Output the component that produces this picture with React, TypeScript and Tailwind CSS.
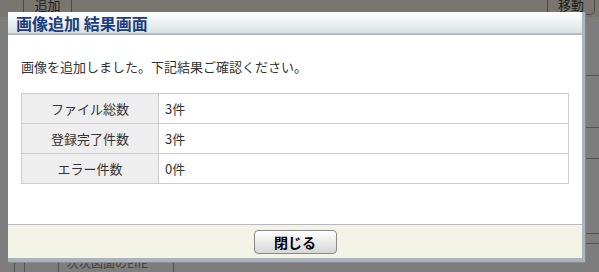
import React from "react";

const jp = "font-['Meiryo','Noto_Sans_CJK_JP','Noto_Sans',sans-serif]";

const rows = [
  { label: "ファイル総数", value: "3件" },
  { label: "登録完了件数", value: "3件" },
  { label: "エラー件数", value: "0件" },
];

function PageBehind() {
  return (
    <div className="flex flex-col h-full">
      <div className="h-[17px] shrink-0 bg-[#78766f] flex justify-between px-[23px] pr-[4px] overflow-hidden">
        <div className="w-[49px] h-[17px] border-x border-b border-[#4a4a48] flex justify-center text-[13px] leading-[13px] text-[#1e1e1e] -mt-[2px] pt-0">
          追加
        </div>
        <div className="w-[48px] h-[17px] border-x border-b border-[#4a4a48] rounded-br-[5px] flex justify-center text-[13px] leading-[13px] text-[#1e1e1e] -mt-[2px]">
          移動
        </div>
      </div>
      <div className="flex-1 flex">
        <div className="flex-1 flex flex-col justify-end">
          <div className="h-[10px] flex text-[12px] leading-[14px] text-[#444]">
            <div className="w-[15px] border-r border-[#555]" />
            <div className="w-[10px] border-r border-[#555]" />
            <div className="w-[34px] border-r border-[#555]" />
            <div className="w-[115px] border-r border-[#555] pl-[8px] -mt-[6px] overflow-hidden">次次図面のEIIE</div>
          </div>
        </div>
        <div className="w-[14px] flex flex-col">
          <div className="h-[59px] border-b border-[#555]" />
          <div className="h-[52px] border-b border-[#555]" />
          <div className="h-[31px] border-b border-[#555]" />
          <div className="h-[75px] border-b border-[#555]" />
          <div className="h-[10px] border-b border-[#555]" />
        </div>
      </div>
    </div>
  );
}

export default function App() {
  return (
    <div className={`relative w-[599px] h-[272px] overflow-hidden bg-[#7d7d7d] ${jp}`}>
      <PageBehind />

      {/* modal dialog over the page */}
      <div className="absolute left-[8px] top-[12px] w-[577px] h-[250px] flex flex-col bg-white border-r-[3px] border-b-[4px] border-[#a9b4bd] shadow-[1px_1px_0_#8a8a8a]">
        <div className="h-[23px] shrink-0 flex items-center px-[8px] bg-gradient-to-b from-[#ffffff] to-[#dbe2e4] border-b-2 border-[#b3bec2]">
          <span className="text-[16px] font-bold text-[#1b3c7d] leading-none">画像追加 結果画面</span>
        </div>
        <div className="flex-1 px-[13px] pt-[22px]">
          <p className="text-[13px] leading-[20px] text-[#333]">画像を追加しました。下記結果ご確認ください。</p>
          <div className="mt-[16px] border border-[#cccccc] border-b-0">
            {rows.map((r) => (
              <div key={r.label} className="flex h-[30px] border-b border-[#cccccc] text-[13px] text-[#333]">
                <div className="w-[137px] shrink-0 bg-[#eeeeee] border-r border-[#cccccc] flex items-center justify-center">
                  {r.label}
                </div>
                <div className="flex items-center pl-[6px]">{r.value}</div>
              </div>
            ))}
          </div>
        </div>
        <div className="h-[34px] shrink-0 flex items-center justify-center bg-[#f4f4e6] border-t border-[#b6babd]">
          <button className="w-[83px] h-[24px] rounded-[4px] border border-[#8a8a8a] bg-gradient-to-b from-[#ffffff] to-[#d6d6d6] text-[14px] font-bold text-black leading-none">
            閉じる
          </button>
        </div>
      </div>
    </div>
  );
}
